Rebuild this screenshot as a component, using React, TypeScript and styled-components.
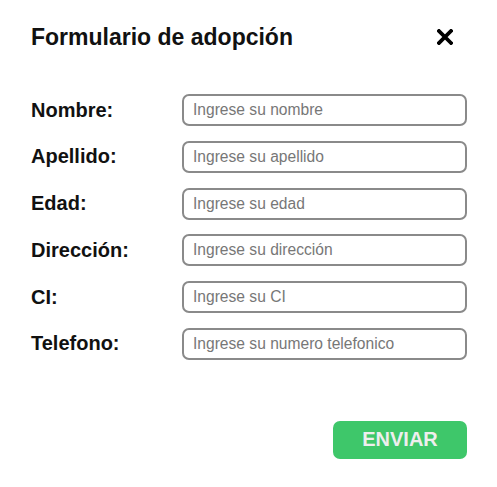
import React from 'react';
import styled, { createGlobalStyle } from 'styled-components';

const GlobalStyle = createGlobalStyle`
  body {
    margin: 0;
    background: #fff;
    font-family: "Liberation Sans", Arial, sans-serif;
  }
`;

const fields = [
  { label: 'Nombre:', placeholder: 'Ingrese su nombre' },
  { label: 'Apellido:', placeholder: 'Ingrese su apellido' },
  { label: 'Edad:', placeholder: 'Ingrese su edad' },
  { label: 'Dirección:', placeholder: 'Ingrese su dirección' },
  { label: 'CI:', placeholder: 'Ingrese su CI' },
  { label: 'Telefono:', placeholder: 'Ingrese su numero telefonico' },
];

const App = () => {
  return (
    <>
      <GlobalStyle />
      <Modal>
        <Header>
          <Title>Formulario de adopción</Title>
          <Close aria-label="Cerrar">
            <svg width="16" height="16" viewBox="0 0 16 16">
              <path d="M2 2L14 14M14 2L2 14" stroke="#000" strokeWidth="3.8" strokeLinecap="square" />
            </svg>
          </Close>
        </Header>
        <Form>
          {fields.map((f) => (
            <Row key={f.label}>
              <Label>{f.label}</Label>
              <Input placeholder={f.placeholder} />
            </Row>
          ))}
        </Form>
        <Footer>
          <Submit>ENVIAR</Submit>
        </Footer>
      </Modal>
    </>
  );
};

export default App;

const Modal = styled.div`
  width: 497px;
  height: 487px;
  box-sizing: border-box;
  padding: 24px 30px 0 31px;
`;
const Header = styled.div`
  display: flex;
  align-items: center;
  justify-content: space-between;
  height: 26px;
`;
const Title = styled.h2`
  margin: 0;
  font-size: 23px;
  font-weight: 700;
  color: #111;
`;
const Close = styled.button`
  border: none;
  background: none;
  padding: 0;
  margin-right: 14px;
  display: flex;
  cursor: pointer;
`;
const Form = styled.div`
  display: flex;
  flex-direction: column;
  gap: 14.8px;
  margin-top: 44px;
`;
const Row = styled.div`
  display: grid;
  grid-template-columns: 151px 1fr;
  align-items: center;
`;
const Label = styled.label`
  font-size: 20px;
  font-weight: 700;
  color: #111;
`;
const Input = styled.input`
  box-sizing: border-box;
  height: 32px;
  width: 100%;
  border: 2px solid #8a8a8a;
  border-radius: 7px;
  padding: 0 9px;
  font-family: "Liberation Sans", Arial, sans-serif;
  font-size: 15.6px;
  outline: none;
  &::placeholder {
    color: #777;
  }
`;
const Footer = styled.div`
  display: flex;
  justify-content: flex-end;
  margin-top: 61px;
`;
const Submit = styled.button`
  width: 134px;
  height: 38px;
  border: none;
  border-radius: 7px;
  background: #3ec76a;
  color: #eeeeee;
  font-family: "Liberation Sans", Arial, sans-serif;
  font-size: 20px;
  font-weight: 700;
  cursor: pointer;
`;
